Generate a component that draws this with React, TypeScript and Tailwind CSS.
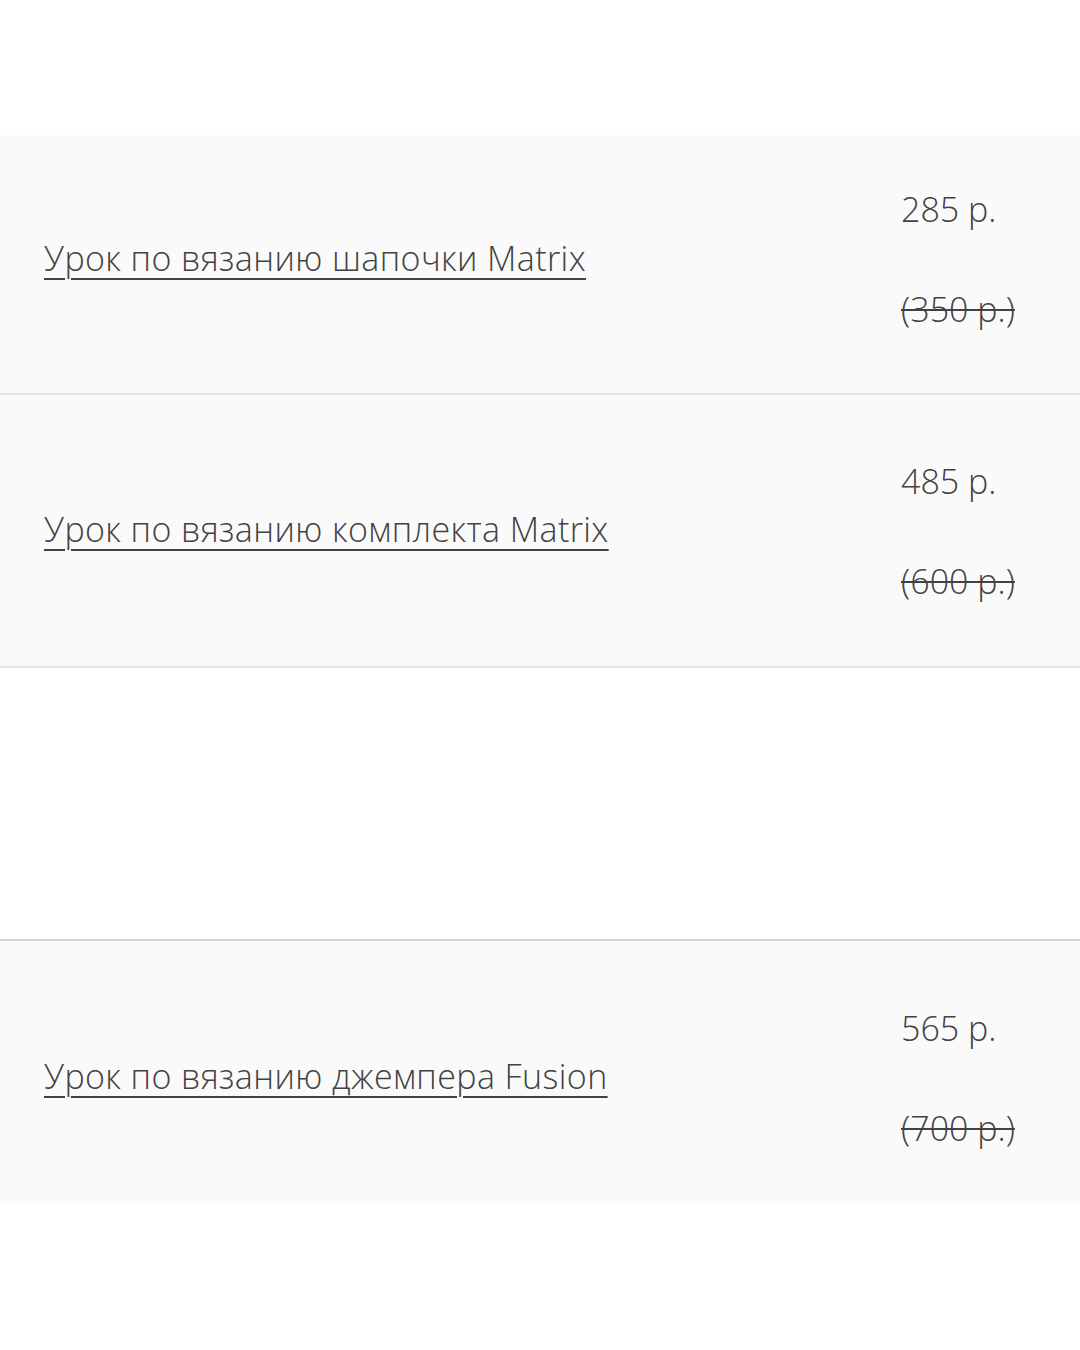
const items = [
  { title: "Урок по вязанию шапочки Matrix", price: "285 р.", old: "(350 р.)", h: "h-[260px]", bg: "bg-[#fafafa]", border: "border-b-2 border-[#e4e4e4]", tOff: "-mt-[12px]", pOff: "-mt-[10px]" },
  { title: "Урок по вязанию комплекта Matrix", price: "485 р.", old: "(600 р.)", h: "h-[273px]", bg: "bg-[#fafafa]", border: "border-b-2 border-[#e4e4e4]", tOff: "-mt-[4px]", pOff: "mt-0" },
  { title: "", price: "", old: "", h: "h-[273px]", bg: "bg-white", border: "border-b-2 border-[#d4d4d4]", tOff: "", pOff: "" },
  { title: "Урок по вязанию джемпера Fusion", price: "565 р.", old: "(700 р.)", h: "h-[263px]", bg: "bg-[#fafafa]", border: "", tOff: "mt-[6px]", pOff: "mt-[10px]" },
];

export default function App() {
  return (
    <div
      className="w-[1080px] h-[1350px] bg-white text-[#424242]"
      style={{ fontFamily: "'Open Sans', sans-serif" }}
    >
      <div className="h-[135px]" />
      {items.map((it, i) => (
        <div key={i} className={`${it.h} ${it.bg} ${it.border} flex items-center pl-[44px]`}>
          <div className={`flex-1 ${it.tOff}`}>
            {it.title && (
              <a href="#" className="text-[34px] font-light leading-[46px] tracking-[0.4px] underline underline-offset-[7px] decoration-2">
                {it.title}
              </a>
            )}
          </div>
          {it.price && (
            <div className={`w-[179px] flex flex-col gap-[54px] text-[34px] font-light leading-[46px] ${it.pOff}`}>
              <span>{it.price}</span>
              <span className="line-through decoration-2">{it.old}</span>
            </div>
          )}
        </div>
      ))}
    </div>
  );
}
